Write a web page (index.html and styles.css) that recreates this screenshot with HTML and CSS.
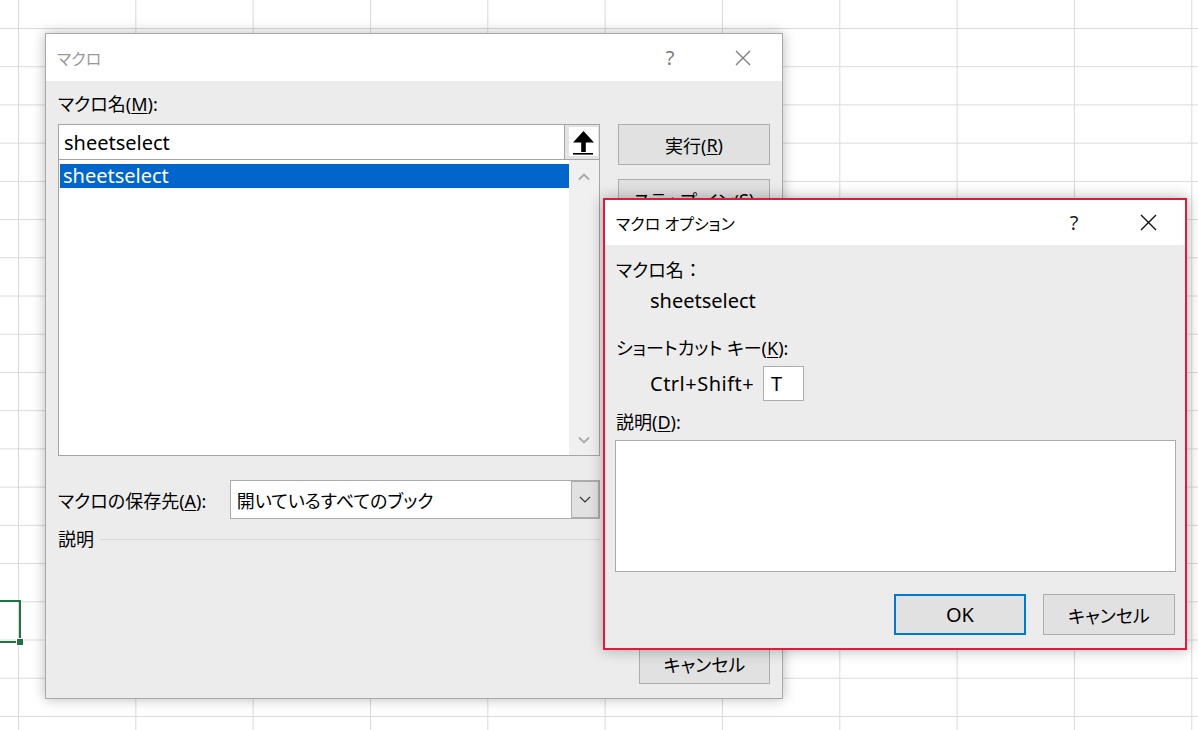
FILE: index.html
```html
<!DOCTYPE html>
<html lang="ja">
<head>
<meta charset="utf-8">
<title>マクロ</title>
<link rel="stylesheet" href="styles.css">
</head>
<body>
<div class="sheet">
  <div class="active-cell"><span class="fill-handle"></span></div>

  <div class="win macro-win">
    <div class="titlebar inactive">
      <span class="tb-title">マクロ</span>
      <span class="tb-help">?</span>
      <span class="tb-close"><svg width="16" height="16" viewBox="0 0 16 16"><path d="M1 1L15 15M15 1L1 15" stroke="currentColor" stroke-width="1.3" fill="none"/></svg></span>
    </div>
    <div class="macro-body">
      <div class="left-col">
        <div class="label">マクロ名(<u>M</u>):</div>
        <div class="name-input">
          <span class="latin name-text">sheetselect</span>
          <div class="up-btn">
            <div class="up-face">
              <svg width="29" height="28" viewBox="0 0 29 28">
                <path d="M14.5 3L4 14.5H12.2V24H16.8V14.5H25Z" fill="#000"/>
                <rect x="4" y="25" width="20" height="1.6" fill="#000"/>
              </svg>
            </div>
          </div>
        </div>
        <div class="macro-list">
          <div class="list-items">
            <div class="list-item selected latin">sheetselect</div>
          </div>
          <div class="vscroll">
            <span class="chev"><svg width="12" height="8" viewBox="0 0 12 8"><path d="M1 6.5L6 1.5L11 6.5" stroke="#a9a9a9" stroke-width="1.8" fill="none"/></svg></span>
            <span class="chev"><svg width="12" height="8" viewBox="0 0 12 8"><path d="M1 1.5L6 6.5L11 1.5" stroke="#a9a9a9" stroke-width="1.8" fill="none"/></svg></span>
          </div>
        </div>
        <div class="store-row">
          <span class="store-label">マクロの保存先(<u>A</u>):</span>
          <div class="select">
            <span class="select-text">開いているすべてのブック</span>
            <span class="select-btn"><svg width="12" height="7" viewBox="0 0 12 7"><path d="M1 1L6 6L11 1" stroke="#333" stroke-width="1.2" fill="none"/></svg></span>
          </div>
        </div>
        <div class="desc-row">
          <span>説明</span>
          <span class="desc-line"></span>
        </div>
      </div>
      <div class="btn-col">
        <div class="btn">実行(<u>R</u>)</div>
        <div class="btn">ステップ イン(<u>S</u>)</div>
        <div class="btn btn-cancel">キャンセル</div>
      </div>
    </div>
  </div>

  <div class="win options-win">
    <div class="titlebar">
      <span class="tb-title">マクロ オプション</span>
      <span class="tb-help">?</span>
      <span class="tb-close"><svg width="17" height="17" viewBox="0 0 17 17"><path d="M1 1L16 16M16 1L1 16" stroke="currentColor" stroke-width="1.4" fill="none"/></svg></span>
    </div>
    <div class="options-body">
      <div class="label">マクロ名 ：</div>
      <div class="label indent latin">sheetselect</div>
      <div class="label gap-lg">ショートカット キー(<u>K</u>):</div>
      <div class="key-row">
        <span class="key-prefix latin">Ctrl+Shift+</span>
        <span class="key-input latin">T</span>
      </div>
      <div class="label gap-sm">説明(<u>D</u>):</div>
      <div class="desc-area"></div>
      <div class="dlg-buttons">
        <div class="btn btn-ok latin">OK</div>
        <div class="btn btn-wide">キャンセル</div>
      </div>
    </div>
  </div>
</div>
</body>
</html>
```

FILE: styles.css
```css
html, body {
  margin: 0;
  padding: 0;
}

body {
  width: 1198px;
  height: 730px;
  overflow: hidden;
  font-family: "Noto Sans", "Noto Sans CJK JP", sans-serif;
  font-feature-settings: "palt";
  font-size: 18px;
  color: #000;
}

.sheet {
  position: relative;
  width: 1198px;
  height: 730px;
  background-color: #fff;
  background-image:
    linear-gradient(to right, #dadada 1px, transparent 1px),
    linear-gradient(to bottom, #dadada 1px, transparent 1px);
  background-size: 117.33px 38.22px;
  background-position: 18px 28px;
}

.active-cell {
  position: absolute;
  left: -3px;
  top: 600px;
  width: 20px;
  height: 39px;
  border: 2px solid #217346;
  box-sizing: content-box;
}

.fill-handle {
  position: absolute;
  right: -5px;
  bottom: -5px;
  width: 6px;
  height: 6px;
  background: #217346;
  border: 1px solid #fff;
}

u {
  text-decoration: underline;
  text-underline-offset: 2px;
  text-decoration-thickness: 1px;
}

.latin {
  font-size: 20px;
}

/* windows */
.win {
  position: absolute;
  box-sizing: border-box;
  background: #ececec;
  display: flex;
  flex-direction: column;
}

.macro-win {
  left: 45px;
  top: 33px;
  width: 738px;
  height: 666px;
  border: 1px solid #a9a9a9;
  box-shadow: 0 0 12px rgba(0, 0, 0, 0.28);
}

.options-win {
  left: 603px;
  top: 198px;
  width: 584px;
  height: 452px;
  border: 2px solid #e3193c;
  box-shadow: 0 0 14px rgba(0, 0, 0, 0.3);
}

.titlebar {
  flex: none;
  height: 47px;
  background: #fff;
  display: flex;
  align-items: center;
  padding-left: 11px;
}

.options-win .titlebar {
  height: 45px;
}

.tb-title {
  flex: 1;
  font-size: 16px;
  color: #000;
}

.tb-help {
  width: 74px;
  text-align: center;
  font-size: 20px;
  color: #222;
}

.tb-close {
  width: 74px;
  display: flex;
  justify-content: center;
  color: #111;
}

.titlebar.inactive .tb-title {
  color: #999;
}

.titlebar.inactive .tb-help,
.titlebar.inactive .tb-close {
  color: #7a7a7a;
}

.titlebar.inactive .tb-help {
  width: 68px;
}

.titlebar.inactive .tb-close {
  width: 78px;
}

/* macro dialog body */
.macro-body {
  flex: 1;
  min-height: 0;
  display: grid;
  grid-template-columns: 542px 152px;
  grid-template-rows: 1fr;
  column-gap: 18px;
  padding: 10px 12px 14px 12px;
}

.left-col {
  display: flex;
  flex-direction: column;
}

.label {
  line-height: 26px;
  height: 26px;
  white-space: nowrap;
}

.macro-body .label {
  margin-bottom: 7px;
}

.name-input {
  height: 36px;
  box-sizing: border-box;
  border: 1px solid #a5a5a5;
  background: #fff;
  display: flex;
  align-items: center;
}

.name-text {
  flex: 1;
  padding-left: 5px;
}

.up-btn {
  align-self: stretch;
  width: 35px;
  box-sizing: border-box;
  border-left: 1px solid #a5a5a5;
  background: #e3e3e3;
  padding: 2px 1px 3px 4px;
  display: flex;
}

.up-face {
  flex: 1;
  background: #fff;
  display: flex;
  align-items: center;
  justify-content: center;
}

.macro-list {
  height: 296px;
  box-sizing: border-box;
  border: 1px solid #a5a5a5;
  border-top: none;
  background: #fff;
  display: flex;
}

.list-items {
  flex: 1;
  padding: 4px 0 0 1px;
}

.list-item {
  height: 24px;
  line-height: 24px;
  padding-left: 3px;
}

.list-item.selected {
  background: #0066cc;
  color: #fff;
}

.vscroll {
  width: 30px;
  background: #f0f0f0;
  display: flex;
  flex-direction: column;
  justify-content: space-between;
  align-items: center;
  padding: 13px 0 11px;
}

.chev {
  display: flex;
}

.store-row {
  margin-top: 24px;
  height: 39px;
  display: flex;
  align-items: center;
}

.store-label {
  width: 172px;
  white-space: nowrap;
}

.select {
  width: 371px;
  height: 39px;
  box-sizing: border-box;
  border: 1px solid #ababab;
  background: #fff;
  display: flex;
  align-items: center;
}

.select-text {
  flex: 1;
  padding-left: 6px;
}

.select-btn {
  align-self: stretch;
  width: 28px;
  box-sizing: border-box;
  border: 1px solid #adadad;
  background: #e1e1e1;
  display: flex;
  align-items: center;
  justify-content: center;
}

.desc-row {
  margin-top: 8px;
  line-height: 24px;
  display: flex;
  align-items: center;
}

.desc-line {
  flex: 1;
  height: 1px;
  background: #d6d6d6;
  margin-left: 6px;
}

.btn-col {
  padding-top: 33px;
  display: flex;
  flex-direction: column;
}

.btn {
  height: 41px;
  box-sizing: border-box;
  border: 1px solid #adadad;
  background: #e1e1e1;
  display: flex;
  align-items: center;
  justify-content: center;
  white-space: nowrap;
}

.btn-col .btn {
  margin-bottom: 14px;
}

.btn-col .btn.btn-cancel {
  margin-top: auto;
  margin-bottom: 0;
  width: 131px;
  align-self: flex-end;
}

/* options dialog body */
.options-body {
  flex: 1;
  padding: 12px 10px 0 10px;
  display: flex;
  flex-direction: column;
}

.options-body .label {
  padding-left: 1px;
}

.options-body .indent {
  margin-top: 5px;
  padding-left: 35px;
}

.options-body .gap-lg {
  margin-top: 21px;
}

.options-body .gap-sm {
  margin-top: 8px;
}

.key-row {
  margin-top: 5px;
  height: 35px;
  display: flex;
  align-items: center;
}

.key-prefix {
  width: 113px;
  padding-left: 35px;
  white-space: nowrap;
  letter-spacing: 0.5px;
}

.key-input {
  width: 41px;
  height: 35px;
  box-sizing: border-box;
  border: 1px solid #adadad;
  background: #fff;
  padding-left: 7px;
  line-height: 33px;
}

.desc-area {
  margin-top: 5px;
  width: 561px;
  height: 132px;
  box-sizing: border-box;
  border: 1px solid #ababab;
  background: #fff;
}

.dlg-buttons {
  margin-top: 22px;
  display: flex;
  justify-content: flex-end;
  gap: 17px;
}

.btn-ok {
  width: 132px;
  border: 2px solid #0078d7;
}

.btn-wide {
  width: 132px;
}
```
